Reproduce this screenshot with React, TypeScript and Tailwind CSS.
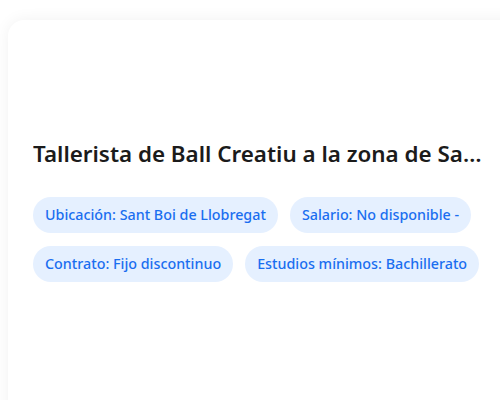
const tags = [
  "Ubicación: Sant Boi de Llobregat",
  "Salario: No disponible -",
  "Contrato: Fijo discontinuo",
  "Estudios mínimos: Bachillerato",
];

export default function App() {
  return (
    <div className="h-[400px] w-[500px] overflow-hidden bg-white font-['Noto_Sans',sans-serif]">
      <div className="ml-2 mt-5 h-[420px] w-[520px] rounded-2xl bg-white px-[25px] pt-[117px] shadow-[0_0_16px_rgba(0,0,0,0.06)]">
        <h2 className="w-[450px] truncate text-[22.4px] font-semibold leading-[34px] text-[#1b1b1b]">
          Tallerista de Ball Creatiu a la zona de Sant Boi de Llobregat
        </h2>
        <div className="mt-[26px] flex w-[460px] flex-wrap gap-x-3 gap-y-[13px]">
          {tags.map((t) => (
            <span
              key={t}
              className="flex h-9 items-center rounded-full bg-[#e5f0ff] px-3 text-[14.3px] font-medium text-[#1a6ef0]"
            >
              {t}
            </span>
          ))}
        </div>
      </div>
    </div>
  );
}
